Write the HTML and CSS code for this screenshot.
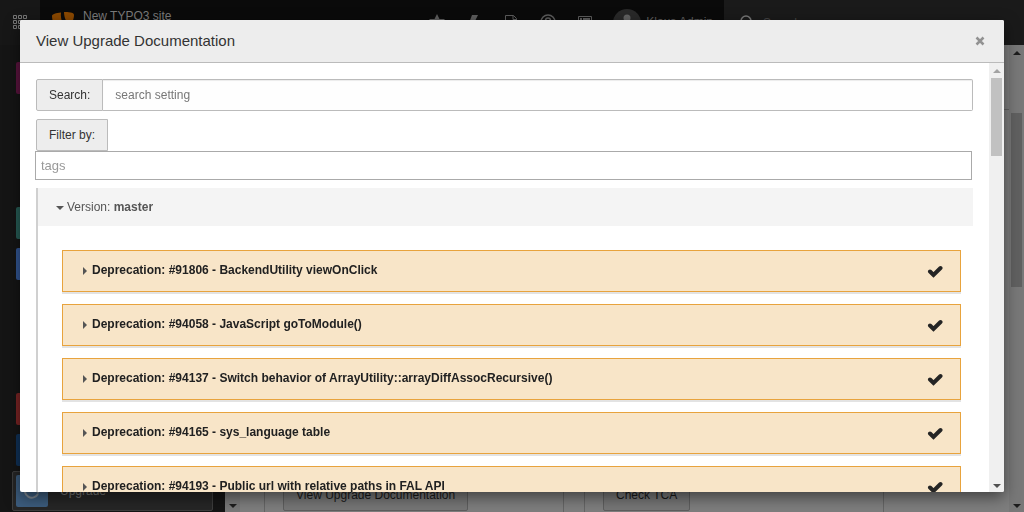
FILE: index.html
```html
<!DOCTYPE html>
<html lang="en">
<head>
<meta charset="utf-8">
<title>View Upgrade Documentation</title>
<link rel="stylesheet" href="styles.css">
</head>
<body>
<div class="backend">
  <header class="topbar">
    <button class="topbar-toggle" aria-label="Toggle modules">
      <svg width="14" height="14" viewBox="0 0 14 14" fill="none" stroke="currentColor"><path d="M.5.5h3v3h-3zM5.500.5h3v3h-3zM10.500.5h3v3h-3zM.5 5.500h3v3h-3zM5.500 5.500h3v3h-3zM10.500 5.500h3v3h-3zM.5 10.500h3v3h-3zM5.500 10.500h3v3h-3zM10.500 10.500h3v3h-3z"/></svg>
    </button>
    <a class="topbar-site" href="#">
      <svg width="22" height="22" viewBox="0 0 22 22" fill="#8a4800"><path d="M9 .5C4 1 0 2 0 4c0 7 6 18 11 18 2 0 4-2 5-4C12 17 8 7 9 .5zM12 0c4 0 10 0 10 3 0 4-2 9-4 9-3 0-6-6-6-12z"/></svg>
      <span>New TYPO3 site</span>
    </a>
    <nav class="topbar-tools">
      <button class="tool" aria-label="Bookmarks"><svg width="16" height="16" viewBox="0 0 16 16" fill="currentColor"><path d="M8 0l2.500 5H16l-4 4 2 7-6-4-6 4 2-7-4-4h5.500z"/></svg></button>
      <button class="tool" aria-label="Clear cache"><svg width="16" height="16" viewBox="0 0 16 16" fill="currentColor"><path d="M6 1h6L9 7h4L5 16l2-7H3z"/></svg></button>
      <button class="tool" aria-label="Open documents"><svg width="16" height="16" viewBox="0 0 16 16" fill="none" stroke="currentColor"><path d="M2.500 1.500h8l3 3v11h-11zM10 1.500v4h3.500"/></svg></button>
      <button class="tool" aria-label="Help"><svg width="16" height="16" viewBox="0 0 16 16" fill="none" stroke="currentColor" stroke-width="1.500"><circle cx="8" cy="8" r="7"/><path d="M5.500 6.500C5.500 3 10.500 3 10.500 6.500 10.500 8 8 8 8 10v2"/></svg></button>
      <button class="tool" aria-label="System information"><svg width="16" height="16" viewBox="0 0 16 16" fill="none" stroke="currentColor"><path d="M1.500 2.500h13v11h-13z"/><path d="M3 5h2M6 5h7M3 7h2M6 7h7" stroke-width="2"/></svg></button>
    </nav>
    <button class="topbar-user">
      <svg width="28" height="28" viewBox="0 0 28 28"><circle cx="14" cy="14" r="14" fill="#292929"/><circle cx="14" cy="9" r="3.500" fill="#626262"/><path d="M7 25V18q0-5 7-5t7 5v7z" fill="#626262"/></svg>
      <span>Klaus Admin</span>
    </button>
    <div class="topbar-search">
      <svg width="16" height="16" viewBox="0 0 16 16" fill="none" stroke="#777" stroke-width="1.500"><circle cx="7" cy="6" r="5"/><path d="M10 10l5 5"/></svg>
      <input type="search" placeholder="Search" aria-label="Search backend">
    </div>
  </header>
  <div class="workspace">
    <nav class="modules">
      <div class="module-group">
        <a class="module" href="#" aria-label="Page"><span class="module-icon plum"></span></a>
      </div>
      <div class="module-group">
        <a class="module" href="#" aria-label="Languages"><span class="module-icon teal"></span></a>
        <a class="module" href="#" aria-label="Extensions"><span class="module-icon blue"></span></a>
      </div>
      <div class="module-group">
        <a class="module" href="#" aria-label="Maintenance"><span class="module-icon red"></span></a>
        <a class="module" href="#" aria-label="Settings"><span class="module-icon navy"></span></a>
        <a class="module active" href="#"><span class="module-icon steel"><svg width="18" height="18" viewBox="0 0 18 18" fill="none" stroke="#7d8790" stroke-width="2"><path d="M13 3A7 7 0 1 0 15 12"/><path d="M12 8h6l-3 4z" fill="#7d8790" stroke="none"/></svg></span><span>Upgrade</span></a>
      </div>
    </nav>
    <div class="track page-track"><span class="arrow down"></span></div>
    <main class="content">
      <div class="docheader"></div>
      <div class="cards">
        <section class="card"><button class="card-button">View Upgrade Documentation</button></section>
        <section class="card"><button class="card-button">Check TCA</button></section>
      </div>
    </main>
    <div class="track page-track"><span class="arrow up"></span><span class="page-thumb"></span><span class="arrow down"></span></div>
  </div>
</div>

<div class="modal" role="dialog" aria-modal="true" aria-labelledby="modal-title">
  <header class="modal-header">
    <h1 class="modal-title" id="modal-title">View Upgrade Documentation</h1>
    <button class="modal-close" aria-label="Close"><svg width="10" height="10" viewBox="0 0 10 10" stroke="currentColor" stroke-width="2.500"><path d="M1.500 1.500l7 7M8.500 1.500l-7 7"/></svg></button>
  </header>
  <div class="modal-body">
    <div class="modal-content">
      <div class="input-group">
        <label class="addon" for="search">Search:</label>
        <input class="search-input" id="search" type="text" placeholder="search setting">
      </div>
      <div class="filter">
        <label class="addon" for="tags">Filter by:</label>
        <input class="tags-input" id="tags" type="text" placeholder="tags">
      </div>
      <section class="version">
        <h2 class="version-header"><button class="version-toggle"><span class="caret-down"></span><span>Version: <strong>master</strong></span></button></h2>
        <div class="entries">
          <article class="entry"><button class="entry-title"><span class="caret-right"></span>Deprecation: #91806 - BackendUtility viewOnClick</button><button class="entry-check" aria-label="Mark as read"><svg width="16" height="14" viewBox="0 0 16 14"><path d="M3 7.500l3.500 3.500 7-7"/></svg></button></article>
          <article class="entry"><button class="entry-title"><span class="caret-right"></span>Deprecation: #94058 - JavaScript goToModule()</button><button class="entry-check" aria-label="Mark as read"><svg width="16" height="14" viewBox="0 0 16 14"><path d="M3 7.500l3.500 3.500 7-7"/></svg></button></article>
          <article class="entry"><button class="entry-title"><span class="caret-right"></span>Deprecation: #94137 - Switch behavior of ArrayUtility::arrayDiffAssocRecursive()</button><button class="entry-check" aria-label="Mark as read"><svg width="16" height="14" viewBox="0 0 16 14"><path d="M3 7.500l3.500 3.500 7-7"/></svg></button></article>
          <article class="entry"><button class="entry-title"><span class="caret-right"></span>Deprecation: #94165 - sys_language table</button><button class="entry-check" aria-label="Mark as read"><svg width="16" height="14" viewBox="0 0 16 14"><path d="M3 7.500l3.500 3.500 7-7"/></svg></button></article>
          <article class="entry"><button class="entry-title"><span class="caret-right"></span>Deprecation: #94193 - Public url with relative paths in FAL API</button><button class="entry-check" aria-label="Mark as read"><svg width="16" height="14" viewBox="0 0 16 14"><path d="M3 7.500l3.500 3.500 7-7"/></svg></button></article>
        </div>
      </section>
    </div>
    <div class="track modal-track"><span class="arrow up"></span><span class="modal-thumb"></span><span class="arrow down"></span></div>
  </div>
</div>
</body>
</html>
```

FILE: styles.css
```css
* { box-sizing: border-box; }

body {
  margin: 0;
  height: 100vh;
  overflow: hidden;
  font: 12px/18px "Liberation Sans", Arial, sans-serif;
  color: #333;
}

button, input {
  margin: 0;
  padding: 0;
  border: 0;
  background: none;
  font: inherit;
  color: inherit;
}

a { color: inherit; text-decoration: none; }
svg { display: block; flex: none; }

/* Dimmed backend */
.backend { display: flex; flex-direction: column; height: 100%; }

.topbar {
  display: flex;
  flex: none;
  height: 45px;
  background: #0a0a0a;
  color: #5c5c5c;
}
.topbar-toggle {
  display: flex;
  align-items: center;
  justify-content: center;
  width: 40px;
  padding-bottom: 1px;
  background: #171717;
  color: #777;
}
.topbar-site {
  display: flex;
  align-items: flex-start;
  gap: 9px;
  flex: 1;
  padding: 12px 12px 0;
  color: #7a7a7a;
}
.topbar-site span { line-height: 8px; }
.topbar-tools { display: flex; padding-bottom: 1px; }
.tool {
  display: flex;
  align-items: center;
  justify-content: center;
  width: 37px;
}
.topbar-user {
  display: flex;
  align-items: center;
  gap: 5px;
  padding: 0 11px 0 10px;
}
.topbar-user span { padding-bottom: 2px; }
.topbar-search {
  display: flex;
  align-items: center;
  gap: 8px;
  width: 300px;
  padding: 0 15px;
  background: #1a1a1a;
}
.topbar-search input { flex: 1; min-width: 0; }
.topbar-search input::placeholder { color: #444; }

.workspace { display: flex; flex: 1; min-height: 0; }

.modules {
  display: flex;
  flex-direction: column;
  gap: 105px;
  flex: none;
  width: 225px;
  padding: 13px 12px 0;
  background: #151515;
  overflow: hidden;
}
.module-group { display: flex; flex-direction: column; gap: 1px; }
.module {
  display: flex;
  align-items: center;
  gap: 12px;
  width: 201px;
  height: 40px;
  padding: 0 3px;
  border: 1px solid transparent;
  border-radius: 2px;
  color: #777;
}
.module.active { border-color: #3d3d3d; background: #262626; }
.module-icon {
  display: flex;
  align-items: center;
  justify-content: center;
  width: 32px;
  height: 32px;
  border-radius: 2px;
}
.plum { background: #5a143e; }
.teal { background: #275c55; }
.blue { background: #325592; }
.red { background: #7a2424; }
.navy { background: #103258; }
.steel { background: #3c5c7d; }

.content {
  display: flex;
  flex-direction: column;
  flex: 1;
  min-width: 0;
  background: #7e7e7e;
}
.docheader { height: 65px; border-bottom: 1px solid #626262; }
.cards {
  display: grid;
  grid-template-columns: repeat(auto-fill, 300px);
  gap: 20px;
  flex: 1;
  padding: 0 24px;
}
.card {
  display: flex;
  align-items: flex-end;
  padding: 0 18px;
  border: solid #656565;
  border-width: 0 1px;
}
.card-button {
  height: 32px;
  margin-bottom: 1px;
  padding: 0 12px;
  border: 1px solid #5e5e5e;
  border-radius: 2px;
  background: #767676;
  color: #1a1a1a;
}

/* Scroll tracks */
.track {
  display: flex;
  flex-direction: column;
  align-items: center;
  flex: none;
  width: 15px;
}
.page-track { background: #787878; color: #1d1d1d; }
.modal-track { background: #f0f0f0; color: #505050; }
.arrow { width: 0; height: 0; border: 4px solid transparent; }
.up { margin: 2px 0 5px; border-bottom-color: currentColor; }
.down { margin: auto 0 0; border-top-color: currentColor; }
.page-thumb { width: 11px; height: 174px; margin-top: 53px; background: #606060; }
.modal-track .up { border-bottom-color: #a3a3a3; }
.modal-thumb { width: 11px; height: 78px; background: #c1c1c1; }

/* Modal */
.modal {
  position: fixed;
  inset: 20px;
  display: flex;
  flex-direction: column;
  overflow: hidden;
  border-radius: 2px;
  background: #fff;
  box-shadow: 0 5px 15px rgba(0, 0, 0, .5);
}
.modal-header {
  display: flex;
  align-items: center;
  justify-content: space-between;
  flex: none;
  height: 43px;
  padding: 0 19px 0 16px;
  border-bottom: 1px solid #bbb;
  background: #ededed;
}
.modal-title { margin: 0; font-size: 15px; font-weight: 400; }
.modal-close { color: #929292; }
.modal-body { display: flex; flex: 1; min-height: 0; }
.modal-content { flex: 1; min-width: 0; padding: 16px; overflow: hidden; }

.input-group { display: flex; margin-bottom: 8px; }
.addon {
  display: inline-block;
  height: 32px;
  padding: 0 12px;
  border: 1px solid #bbb;
  border-radius: 2px 0 0 2px;
  background: #ededed;
  line-height: 30px;
}
.search-input {
  flex: 1;
  min-width: 0;
  height: 32px;
  padding: 0 12px;
  border: 1px solid #bbb;
  border-left: 0;
  border-radius: 0 2px 2px 0;
  background: #fefefe;
  box-shadow: inset 0 1px 1px rgba(0, 0, 0, .075);
}
.search-input::placeholder { color: #777; }
.filter { display: flex; flex-direction: column; align-items: flex-start; margin: 0 1px 8px 0; }
.tags-input {
  align-self: stretch;
  height: 29px;
  margin-left: -1px;
  padding: 0 5px;
  border: 1px solid #aaa;
  font-size: 13px;
}
.tags-input::placeholder { color: #999; }

.version { border-left: 2px solid #d0d0d0; }
.version-header { margin: 0; background: #f4f4f4; font-size: 12px; font-weight: 400; }
.version-toggle {
  display: flex;
  align-items: center;
  gap: 3px;
  width: 100%;
  height: 38px;
  padding: 0 18px;
  color: #555;
}
.caret-down {
  border: 4px solid transparent;
  border-top-color: #555;
  border-bottom: 0;
  margin-top: 2px;
}
.caret-right {
  border: 4px solid transparent;
  border-left-color: #555;
  border-right: 0;
  margin-top: 2px;
}
.entries {
  display: flex;
  flex-direction: column;
  gap: 12px;
  padding: 24px 12px 24px 24px;
}
.entry {
  display: flex;
  align-items: center;
  justify-content: space-between;
  height: 42px;
  padding: 0 17px 0 20px;
  border: 1px solid #e8a33d;
  background: #f8e5c8;
  box-shadow: 0 2px 0 #e3e3e3;
}
.entry-title {
  display: flex;
  align-items: center;
  gap: 5px;
  padding-bottom: 2px;
  font-weight: 700;
  color: #212121;
}
.entry-check svg { fill: none; stroke: #252525; stroke-width: 4; }
.entry-check path { stroke-linecap: round; }
```
